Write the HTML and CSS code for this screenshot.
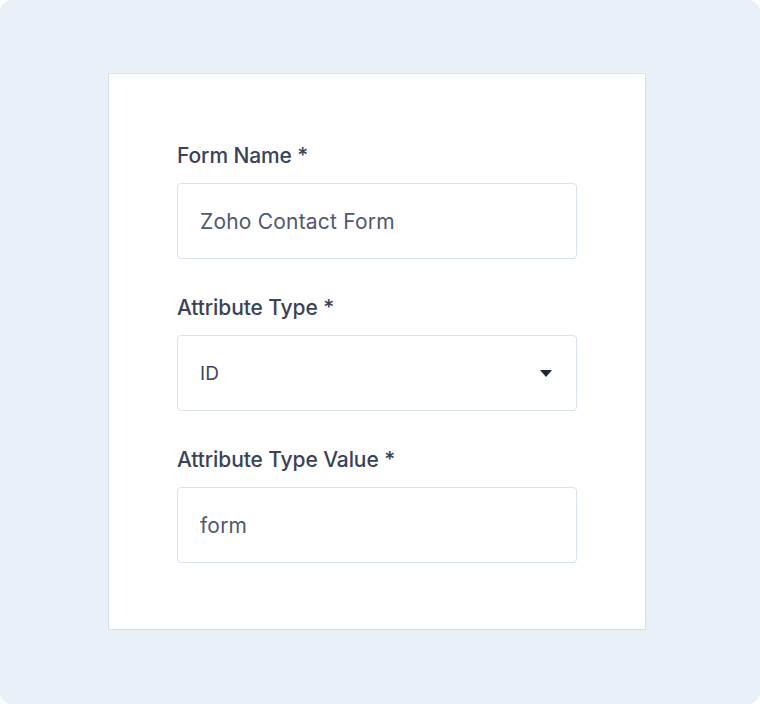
FILE: index.html
```html
<!DOCTYPE html>
<html lang="en">
<head>
<meta charset="UTF-8">
<meta name="viewport" content="width=device-width, initial-scale=1.0">
<title>Form Settings</title>
<link rel="stylesheet" href="styles.css">
</head>
<body>

<div class="panel">
    <div class="card">
        <div class="field">
            <label class="label">Form Name *</label>
            <div class="input">Zoho Contact Form</div>
        </div>
        <div class="field">
            <label class="label">Attribute Type *</label>
            <div class="input select">
                <span>ID</span>
                <svg class="caret" width="12" height="7" viewBox="0 0 12 7"><path d="M0 0 L12 0 L6 7 Z" fill="#1e2535"/></svg>
            </div>
        </div>
        <div class="field">
            <label class="label">Attribute Type Value *</label>
            <div class="input">form</div>
        </div>
    </div>
</div>

</body>
</html>
```

FILE: styles.css
```css
body {
    margin: 0;
    padding: 0;
    background-color: #ffffff;
    font-family: Inter, "Noto Sans", sans-serif;
}
.panel {
    width: 760px;
    height: 704px;
    box-sizing: border-box;
    background-color: #e9f0f8;
    border-radius: 12px;
    padding: 73px 0 0 108px;
}
.card {
    width: 538px;
    height: 557px;
    box-sizing: border-box;
    background-color: #ffffff;
    border: 1px solid #d6e1f0;
    padding: 67px 68px 0 68px;
}
.field {
    margin-bottom: 34px;
}
.label {
    display: block;
    font-size: 21px;
    font-weight: 500;
    color: #3a4258;
    letter-spacing: -0.1px;
    line-height: 30px;
    margin-bottom: 12px;
}
.input {
    height: 76px;
    box-sizing: border-box;
    border: 1px solid #d9e2ef;
    border-radius: 4px;
    padding: 0 22px;
    display: flex;
    align-items: center;
    font-size: 21px;
    color: #4f586e;
    letter-spacing: 0.2px;
}
.select {
    justify-content: space-between;
    font-size: 19px;
    color: #3d4558;
}
.caret {
    margin-right: 2px;
}
```
